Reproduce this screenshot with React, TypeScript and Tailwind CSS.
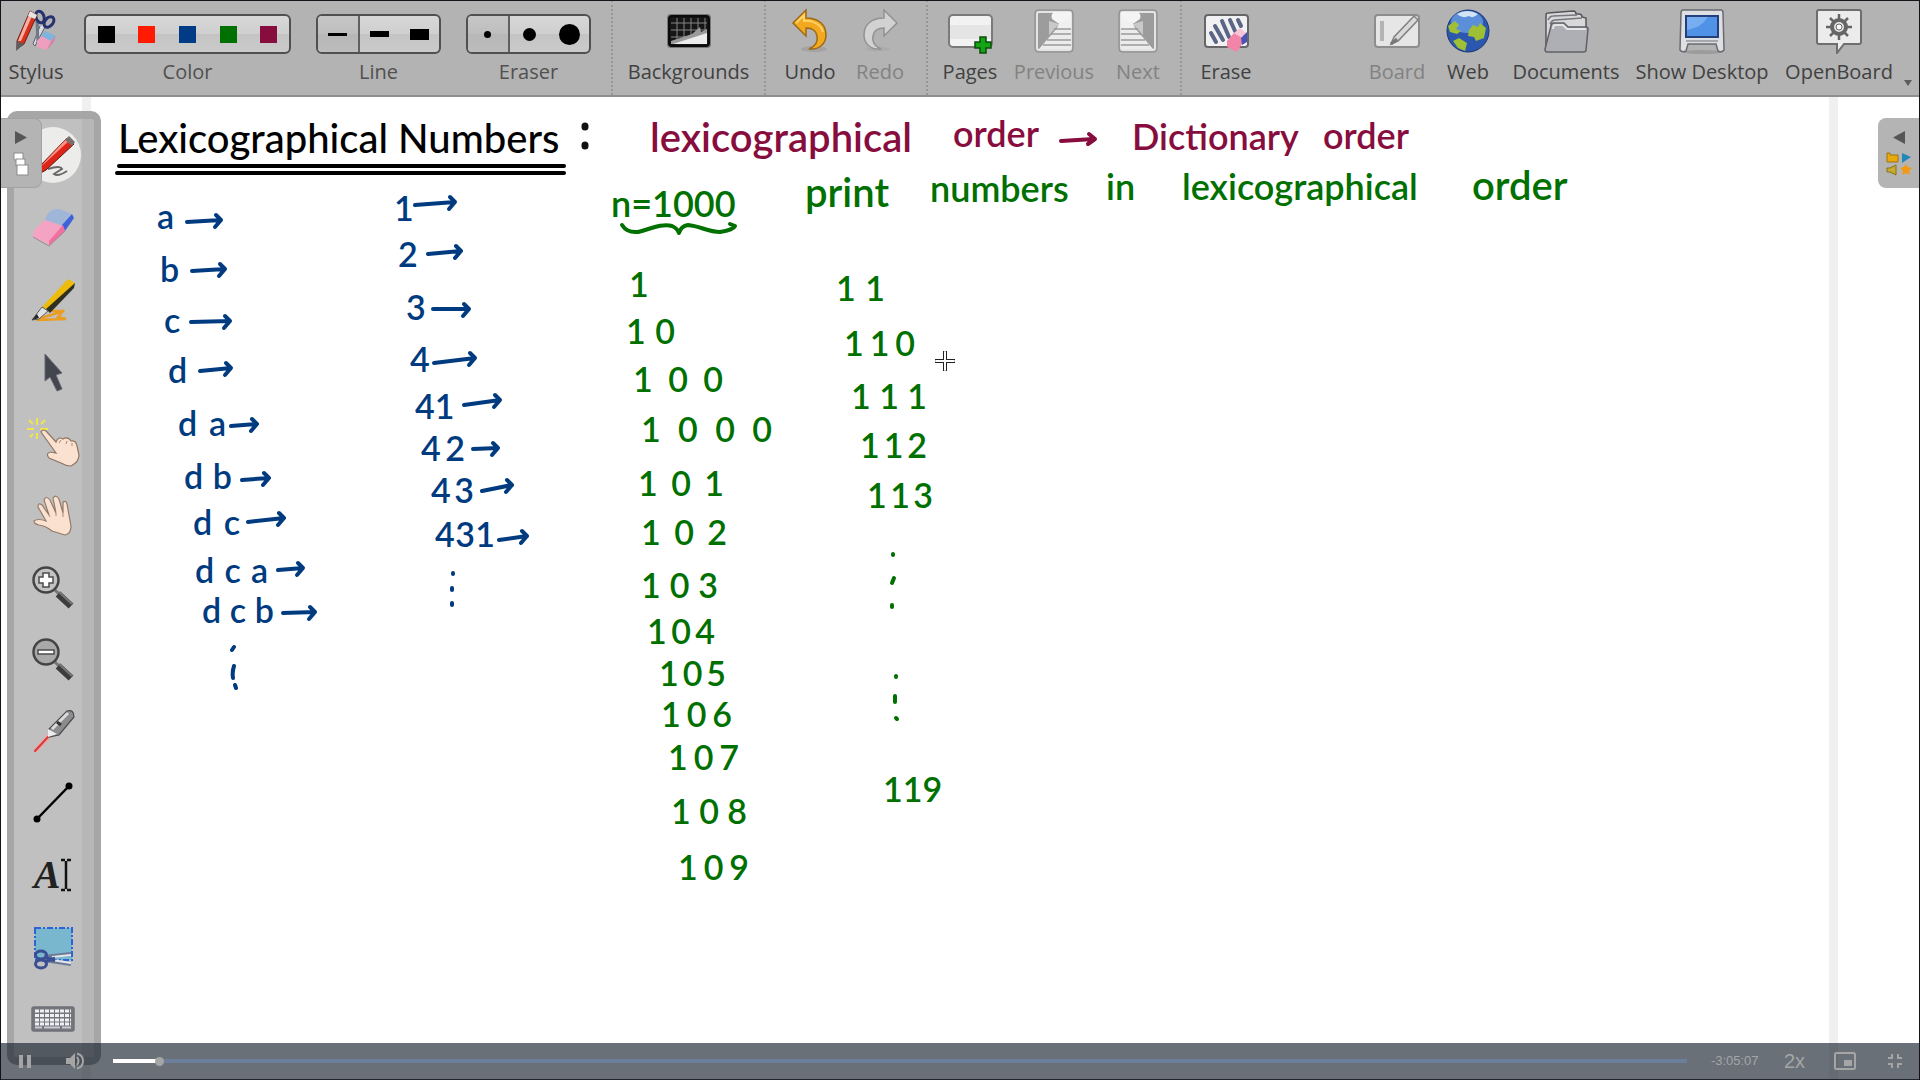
import React from "react";

const label = "font-['Open_Sans','Noto_Sans',sans-serif] text-[20px] leading-7 whitespace-nowrap";

/* ---------- Toolbar icons ---------- */

function Icon({ children, className }: { children: React.ReactNode; className?: string }) {
  return (
    <svg viewBox="0 0 46 46" className={className ?? "h-[46px] w-[46px]"} aria-hidden="true">
      {children}
    </svg>
  );
}

const StylusIcon = () => (
  <Icon>
    <path d="M27 18 L20 36 L22 38 L33 17" fill="#d8dce3" stroke="#59606e" strokeWidth="1" />
    <path d="M24 12 L25 35" stroke="#6f7784" strokeWidth="3" />
    <ellipse cx="27" cy="9" rx="4" ry="6" fill="none" stroke="#26336f" strokeWidth="3" transform="rotate(-20 27 9)" />
    <ellipse cx="36" cy="14" rx="4" ry="6" fill="none" stroke="#26336f" strokeWidth="3" transform="rotate(40 36 14)" />
    <path d="M24 33 L30 26 L39 30 L34 42 L24 39 Z" fill="#ee9fc0" />
    <path d="M28 28 L32 23 L43 28 L38 33 Z" fill="#7fb2dc" />
    <path d="M38 33 L43 28 L41 34 L34 42 Z" fill="#d983a8" />
    <path d="M17 3 L24 7 L11 36 L4 41 L4 33 Z" fill="#d9301c" stroke="#6d2016" strokeWidth="1" />
    <path d="M17 4 L20 6 L8 33 L5 33 Z" fill="#f5b0a4" />
    <path d="M4 33 L11 36 L3 43 Z" fill="#5d5d5d" />
    <path d="M15 8 L22 11 L24 7 L17 3 Z" fill="#e5e5e5" />
  </Icon>
);

const BackgroundsIcon = () => (
  <Icon>
    <rect x="1" y="6" width="44" height="34" rx="4" fill="#777" />
    <rect x="3" y="8" width="40" height="30" rx="3" fill="#161616" stroke="#0b0b0b" strokeWidth="2" />
    <path d="M5 15 H41 M5 22 H41 M5 29 H41 M11 10 V36 M18 10 V36 M25 10 V36 M32 10 V36 M39 10 V36" stroke="#858585" strokeWidth="1" />
    <path d="M5 33 L26 26 L34 19 L35 24 L41 21 V36 H5 Z" fill="#9a9a9a" />
    <path d="M7 36 L41 25 V36 Z" fill="#ececec" />
  </Icon>
);

const arrowPath = "M6 15 L19 2 V10 C32 10 39 17 39 27 C39 36 32 42 22 41 C29 38 31 33 30 28 C29 22 25 20 19 20 V28 Z";
const UndoIcon = () => (
  <Icon>
    <ellipse cx="27" cy="41" rx="13" ry="3" fill="#a3a3a3" />
    <path d={arrowPath} fill="#f2a91f" stroke="#9c6a17" strokeWidth="1.5" />
    <path d="M9 15 L17 7 V13 C27 12 34 17 36 24" fill="none" stroke="#ffd36b" strokeWidth="2" />
  </Icon>
);
const RedoIcon = () => (
  <Icon>
    <g transform="translate(46 0) scale(-1 1)">
      <ellipse cx="25" cy="41" rx="12" ry="2" fill="#aaa" />
      <path d={arrowPath} fill="#d2d2d2" stroke="#929292" strokeWidth="1.5" />
    </g>
  </Icon>
);
const PagesIcon = () => (
  <Icon>
    <rect x="2" y="7" width="43" height="32" rx="4" fill="#f2f2f2" stroke="#7a7a7a" strokeWidth="2" />
    <path d="M3 24 H44" stroke="#e5e5e5" strokeWidth="14" />
    <path d="M33 29 H39 V34 H44 V40 H39 V45 H33 V40 H28 V34 H33 Z" fill="#14a514" stroke="#0c4d0c" strokeWidth="1.5" />
  </Icon>
);
const PageArt = () => (
  <>
    <rect x="4" y="2" width="38" height="42" rx="3" fill="#a9a9a9" stroke="#8b8b8b" strokeWidth="1" />
    <rect x="6" y="4" width="34" height="38" rx="2" fill="#9c9c9c" stroke="#e4e4e4" strokeWidth="2" />
    <path d="M28 18 L40 18 V41 H8 Z" fill="#ececec" />
    <path d="M21 6 Q19 11 24 13 Q29 18 37 13 L40 10 V4 H23 Z" fill="#f4f4f4" />
    <path d="M28 15 L40 10 V20 H26 Z" fill="#f0f0f0" />
    <path d="M18 13 L28 16 L18 27 Z" fill="#c9c9c9" />
    <path d="M23 21 H40 M20 26 H40 M16 32 H40 M12 37 H40" stroke="#9a9a9a" strokeWidth="1.5" />
  </>
);
const PreviousIcon = () => (
  <Icon>
    <PageArt />
  </Icon>
);
const NextIcon = () => (
  <Icon>
    <g transform="translate(46 0) scale(-1 1)">
      <PageArt />
    </g>
  </Icon>
);
const EraseIcon = () => (
  <Icon>
    <rect x="2" y="7" width="43" height="32" rx="3" fill="#f1f1f4" stroke="#666" strokeWidth="2" />
    <path d="M8 25 L13 34 M12 18 L20 32 M19 13 L26 29 M27 12 L32 23 M35 12 L38 18" fill="none" stroke="#5b6585" strokeWidth="4" strokeLinecap="round" />
    <path d="M24 33 L31 25 L42 31 L34 44 L24 39 Z" fill="#f284a8" />
    <path d="M31 25 L37 20 L44 26 L41 31 Z" fill="#f8c3d6" />
    <path d="M38 30 L44 24 V34 L39 37 Z" fill="#4a53b8" />
  </Icon>
);
const BoardIcon = () => (
  <Icon>
    <rect x="1" y="7" width="44" height="32" rx="3" fill="#e6e6e6" stroke="#8d8d8d" strokeWidth="2" />
    <rect x="6" y="13" width="4" height="20" fill="#b4b4b4" />
    <path d="M17 36 L20 29 L40 8 L44 12 L24 33 Z" fill="#d9d9d9" stroke="#808080" strokeWidth="1.5" />
    <path d="M17 36 L23 31" stroke="#777" strokeWidth="3" />
  </Icon>
);
const WebIcon = () => (
  <Icon>
    <circle cx="23" cy="23" r="21" fill="#2b57ae" stroke="#1b3675" strokeWidth="1" />
    <ellipse cx="22" cy="14" rx="16" ry="11" fill="#5c8fda" />
    <path d="M12 6 Q22 0 33 6 Q28 11 24 8 Q17 11 12 6 Z" fill="#d4e4f7" />
    <path d="M3 18 L10 13 L14 17 L11 21 L16 23 L12 26 L5 24 Z M24 22 L28 17 L33 19 L35 15 L41 20 L39 30 L31 33 L29 29 L23 28 Z M8 33 L14 30 L22 35 L20 43 L13 40 Z" fill="#9fbf35" />
  </Icon>
);
const DocumentsIcon = () => (
  <Icon>
    <path d="M3 40 V7 Q3 5 5 5 L30 3 Q33 3 33 6 L36 6 Q39 6 39 9 L43 10 V40 Z" fill="#d8d8da" stroke="#55565a" strokeWidth="1.5" />
    <path d="M5 12 Q7 8 10 8 L34 7 M7 16 Q9 12 12 12 L39 10" fill="none" stroke="#77787c" strokeWidth="1.5" />
    <path d="M8 18 Q8 15 11 15 H21 L25 19 H43 Q45 19 45 21 L43 42 Q43 44 40 44 H4 Q2 44 2 41 Z" fill="#aeafb4" stroke="#606165" strokeWidth="1.5" />
    <path d="M10 21 Q10 17 13 17 H20 L24 21 H43" fill="none" stroke="#e5e5e8" strokeWidth="2" />
  </Icon>
);
const DesktopIcon = () => (
  <Icon>
    <ellipse cx="24" cy="44" rx="20" ry="2" fill="#9c9c9c" />
    <path d="M4 2 H42 Q44 2 44 5 L45 42 Q43 45 39 43 L37 36 H9 L7 43 Q3 45 1 42 L2 5 Q2 2 4 2 Z" fill="#dedfe2" stroke="#6a6b70" strokeWidth="1.5" />
    <rect x="6" y="7" width="34" height="23" fill="#24407b" />
    <rect x="8" y="9" width="30" height="19" fill="#4f92e6" />
    <path d="M8 22 Q22 20 29 9 H8 Z" fill="#76aef1" />
    <path d="M7 33 H39" stroke="#93949a" strokeWidth="1.5" />
  </Icon>
);
const OpenBoardIcon = () => (
  <Icon>
    <path d="M3 2 H43 Q45 2 45 4 V34 Q45 36 43 36 H28 L21 45 V36 H3 Q1 36 1 34 V4 Q1 2 3 2 Z" fill="#ececec" stroke="#6e6e6e" strokeWidth="2" />
    <path d="M23 6 V32 M10 19 H36 M14 10 L32 28 M32 10 L14 28" stroke="#666" strokeWidth="2.5" />
    <circle cx="23" cy="19" r="7" fill="#e8e8e8" stroke="#666" strokeWidth="4" />
    <circle cx="23" cy="19" r="3" fill="#fff" stroke="#666" strokeWidth="1" />
  </Icon>
);

/* ---------- Palette icons ---------- */

const Pen = () => (
  <svg viewBox="0 0 58 58" className="h-[58px] w-[58px]" aria-hidden="true">
    <circle cx="29" cy="29" r="28" fill="#ececea" />
    <path d="M24 43 Q36 39 38 43 Q33 46 30 48 Q34 51 43 45" fill="none" stroke="#686868" strokeWidth="2" />
    <path d="M43 12 L50 18 L22 44 L15 48 L16 40 Z" fill="#dc2418" stroke="#5d1b16" strokeWidth="1" />
    <path d="M43 12 L46 14 L20 38 L17 40 Z" fill="#ff8e80" />
    <path d="M41 14 L45 10 L51 16 L48 20 Z" fill="#77706c" />
  </svg>
);
const Eraser = () => (
  <Icon>
    <path d="M4 26 L17 14 L33 22 L19 40 L3 33 Z" fill="#f4a3c3" />
    <path d="M15 16 Q18 4 29 5 L42 10 L33 22 Z" fill="#a0b6d8" />
    <path d="M32 21 L42 10 L44 14 L35 27 Z" fill="#3f62d8" />
    <path d="M33 21 L35 27 L19 42 L19 37 Z" fill="#f0709f" />
    <path d="M3 33 L19 42 L35 27" fill="none" stroke="#a58690" strokeWidth="1" />
  </Icon>
);
const Marker = () => (
  <Icon>
    <path d="M8 43 Q24 38 34 35 L22 35 M34 34 L28 41 L36 43 L6 44" fill="none" stroke="#e99d22" strokeWidth="2.5" />
    <path d="M38 3 L45 7 L20 35 L12 31 Z" fill="#edbb0a" />
    <path d="M45 7 L44 12 L20 37 L16 33 Z" fill="#30301f" />
    <path d="M12 31 L18 35 L9 43 L2 44 Z" fill="#dfe1e4" stroke="#5b5b5b" strokeWidth="1" />
    <path d="M2 44 L7 38 L9 42 Z" fill="#222" />
  </Icon>
);
const Pointer = () => (
  <Icon>
    <path d="M15 6 V33 L20 29 L27 43 L32 41 L26 27 L32 25 Z" fill="#43454f" stroke="#666975" strokeWidth="1" />
  </Icon>
);
const Finger = () => (
  <svg viewBox="0 0 54 54" className="h-[54px] w-[54px]" aria-hidden="true">
    <path d="M11 2 V9 M11 17 V23 M1 13 H8 M14 13 H22 M3 4 L7 8 M19 4 L15 8 M4 21 L7 18" stroke="#eee64a" strokeWidth="2" />
    <path d="M15 16 Q17 12 21 16 L30 26 Q32 20 37 23 Q42 20 45 25 Q50 24 51 30 L53 39 Q53 46 45 50 Q40 50 35 47 L23 42 Q19 37 25 36 L30 37 Z" fill="#fbe1cf" stroke="#8e7564" strokeWidth="1.2" />
    <path d="M33 27 L35 24 M40 28 L41 25 M46 30 V27" stroke="#a98b78" strokeWidth="1" />
  </svg>
);
const Hand = () => (
  <Icon>
    <path d="M4 29 Q8 26 16 29 L8 15 Q8 10 12 13 L19 23 L14 8 Q16 3 20 8 L26 21 L23 6 Q26 2 29 7 L33 21 L33 10 Q36 8 37 12 L41 34 Q41 42 35 43 L22 39 Q16 34 9 33 Q4 32 4 29 Z" fill="#fbe1cf" stroke="#947b69" strokeWidth="1.2" />
    <path d="M19 23 L20 25 M26 21 V24 M33 21 V25" stroke="#a98b78" strokeWidth="1" />
  </Icon>
);
const Zoom = ({ plus }: { plus?: boolean }) => (
  <Icon>
    <path d="M25 26 L30 31" stroke="#777" strokeWidth="3" />
    <path d="M28 30 L41 42" stroke="#3c3c3c" strokeWidth="7" />
    <path d="M29 28 L42 40" stroke="#777" strokeWidth="2" />
    <circle cx="16" cy="16" r="12.5" fill={plus ? "#c3c3c5" : "#a9a9a9"} stroke="#444" strokeWidth="2.5" />
    <path
      d={plus ? "M13 9 H19 V13 H23 V19 H19 V23 H13 V19 H9 V13 H13 Z" : "M8 14 H24 V18 H8 Z"}
      fill="#fff"
      stroke="#4c4c4c"
      strokeWidth="1.5"
    />
  </Icon>
);
const Laser = () => (
  <Icon>
    <path d="M6 42 L18 29" stroke="#e9aaa7" strokeWidth="5" strokeLinecap="round" />
    <path d="M5 43 L18 29" stroke="#d73a3a" strokeWidth="2" strokeLinecap="round" />
    <path d="M37 3 Q44 1 44 9 L29 27 L19 29 L19 21 Z" fill="#8c8c8e" stroke="#4b4b4c" strokeWidth="1.2" />
    <path d="M38 5 L22 21" stroke="#dcdcde" strokeWidth="3" />
    <path d="M27 14 L31 17" stroke="#333" strokeWidth="3" />
    <path d="M18 21 L27 26 L18 29 Z" fill="#ececec" />
  </Icon>
);
const LineTool = () => (
  <Icon>
    <path d="M7 39 L39 6" stroke="#000" strokeWidth="2.5" />
    <circle cx="7" cy="39" r="3.5" />
    <circle cx="39" cy="6" r="3.5" />
  </Icon>
);
const TextTool = () => (
  <span className="flex items-center">
    <span className="font-['Liberation_Serif',serif] text-[40px] font-bold italic leading-10 text-[#222]">A</span>
    <svg viewBox="0 0 12 34" className="h-[34px] w-3" aria-hidden="true">
      <path d="M1 2 H5 M7 2 H11 M6 3 V31 M1 32 H5 M7 32 H11" stroke="#111" strokeWidth="2.5" />
    </svg>
  </span>
);
const Capture = () => (
  <Icon>
    <rect x="5" y="4" width="37" height="32" fill="#79b7cf" stroke="#2c64d8" strokeWidth="2" strokeDasharray="6 2 2 2" />
    <path d="M14 33 L41 30 M14 36 L41 40" stroke="#6d7a94" strokeWidth="4" />
    <path d="M22 33 L41 31 M22 36 L41 39" stroke="#e4e8ef" strokeWidth="2" />
    <ellipse cx="11" cy="31" rx="5.5" ry="4" fill="none" stroke="#3a4f93" strokeWidth="3" />
    <ellipse cx="11" cy="40" rx="5.5" ry="4" fill="none" stroke="#3a4f93" strokeWidth="3" />
    <path d="M15 33 L25 37 M15 38 L25 34" stroke="#3a4f93" strokeWidth="3" />
  </Icon>
);
const Keyboard = () => (
  <Icon>
    <rect x="2" y="11" width="42" height="24" rx="2" fill="#74767c" stroke="#6f7178" strokeWidth="1.5" />
    <path d="M5 15 H41 M5 19.5 H41 M5 24 H41 M5 28 H41" stroke="#eef0f5" strokeWidth="3" strokeDasharray="4 1" />
    <path d="M5 31.5 H12 M14 31.5 H30 M32 31.5 H41" stroke="#c9cbd2" strokeWidth="2" />
  </Icon>
);

const tools: { name: string; icon: React.ReactNode }[] = [
  { name: "Pen", icon: <Pen /> },
  { name: "Eraser", icon: <Eraser /> },
  { name: "Highlighter", icon: <Marker /> },
  { name: "Select", icon: <Pointer /> },
  { name: "Interact", icon: <Finger /> },
  { name: "Scroll page", icon: <Hand /> },
  { name: "Zoom in", icon: <Zoom plus /> },
  { name: "Zoom out", icon: <Zoom /> },
  { name: "Laser pointer", icon: <Laser /> },
  { name: "Draw line", icon: <LineTool /> },
  { name: "Write text", icon: <TextTool /> },
  { name: "Capture", icon: <Capture /> },
  { name: "Virtual keyboard", icon: <Keyboard /> },
];

/* ---------- Toolbar pieces ---------- */

function ToolButton({ text, width, disabled, children }: { text: string; width: string; disabled?: boolean; children: React.ReactNode }) {
  return (
    <button disabled={disabled} className={`flex shrink-0 flex-col items-center pt-2 ${width}`}>
      {children}
      <span className={`${label} mt-1 ${disabled ? "text-[#828282]" : "text-[#414141]"}`}>{text}</span>
    </button>
  );
}

function Group({ text, width, children }: { text: string; width: string; children: React.ReactNode }) {
  return (
    <div role="group" aria-label={text} className={`flex shrink-0 flex-col items-center pt-3.5 ${width}`}>
      <div className="flex h-10 w-full items-stretch overflow-hidden rounded-md border-2 border-[#505050] bg-[linear-gradient(#d8d8d8,#cfcfcf_50%,#c4c4c4_50%,#cacaca)]">
        {children}
      </div>
      <span className={`${label} mt-1 text-[#505050]`}>{text}</span>
    </div>
  );
}

const Separator = () => <div className="w-0 shrink-0 border-l-2 border-dotted border-[#979797]" />;

const swatches = [
  { name: "Black", cls: "bg-black" },
  { name: "Red", cls: "bg-[#ff1a00]" },
  { name: "Blue", cls: "bg-[#003b86]" },
  { name: "Green", cls: "bg-[#007000]" },
  { name: "Maroon", cls: "bg-[#870d3e]" },
];
const lines = [
  { name: "Thin line", cls: "h-[3px]" },
  { name: "Medium line", cls: "h-[6px]" },
  { name: "Thick line", cls: "h-[11px]" },
];
const erasers = [
  { name: "Small eraser", cls: "size-[7px]" },
  { name: "Medium eraser", cls: "size-[13px]" },
  { name: "Large eraser", cls: "size-[21px]" },
];
const segment = "flex flex-1 items-center justify-center";
const picked = "border-r-2 border-[#606060] bg-[linear-gradient(#c6c6c6,#bebebe_50%,#b7b7b7_50%,#bcbcbc)]";

/* ---------- Board content ---------- */

const TOP = 97;

type Note = { x: number; w: number; y: number; t: string; c: string };
const blue = "text-[#003b80]";
const green = "text-[#007000]";
const maroon = "text-[#870d3e]";

// x and w give the span that the characters are spread over, y the middle of the row
const notes: Note[] = [
  { x: 157, w: 20, y: 216, t: "a", c: blue },
  { x: 160, w: 20, y: 269, t: "b", c: blue },
  { x: 164, w: 18, y: 320, t: "c", c: blue },
  { x: 168, w: 20, y: 370, t: "d", c: blue },
  { x: 178, w: 48, y: 423, t: "da", c: blue },
  { x: 184, w: 48, y: 476, t: "db", c: blue },
  { x: 193, w: 47, y: 522, t: "dc", c: blue },
  { x: 195, w: 73, y: 570, t: "dca", c: blue },
  { x: 202, w: 72, y: 610, t: "dcb", c: blue },
  { x: 394, w: 18, y: 208, t: "1", c: blue },
  { x: 398, w: 20, y: 254, t: "2", c: blue },
  { x: 406, w: 18, y: 307, t: "3", c: blue },
  { x: 410, w: 18, y: 359, t: "4", c: blue },
  { x: 415, w: 39, y: 406, t: "41", c: blue },
  { x: 421, w: 44, y: 448, t: "42", c: blue },
  { x: 431, w: 43, y: 490, t: "43", c: blue },
  { x: 435, w: 60, y: 534, t: "431", c: blue },
  { x: 629, w: 18, y: 284, t: "1", c: green },
  { x: 626, w: 49, y: 331, t: "10", c: green },
  { x: 633, w: 90, y: 379, t: "100", c: green },
  { x: 641, w: 131, y: 429, t: "1000", c: green },
  { x: 638, w: 86, y: 483, t: "101", c: green },
  { x: 641, w: 86, y: 532, t: "102", c: green },
  { x: 641, w: 77, y: 585, t: "103", c: green },
  { x: 647, w: 68, y: 631, t: "104", c: green },
  { x: 659, w: 67, y: 673, t: "105", c: green },
  { x: 661, w: 71, y: 714, t: "106", c: green },
  { x: 668, w: 71, y: 757, t: "107", c: green },
  { x: 671, w: 76, y: 811, t: "108", c: green },
  { x: 678, w: 71, y: 867, t: "109", c: green },
  { x: 836, w: 49, y: 288, t: "11", c: green },
  { x: 844, w: 71, y: 343, t: "110", c: green },
  { x: 851, w: 76, y: 396, t: "111", c: green },
  { x: 860, w: 67, y: 445, t: "112", c: green },
  { x: 867, w: 66, y: 495, t: "113", c: green },
  { x: 883, w: 58, y: 789, t: "119", c: green },
];

const medium = "text-[36px]";
const large = "text-[40px]";

type Phrase = { x: number; y: number; t: string; c: string; s: string };
// y is the middle of the line box
const phrases: Phrase[] = [
  { x: 650, y: 137, t: "lexicographical", c: maroon, s: large },
  { x: 953, y: 133, t: "order", c: maroon, s: medium },
  { x: 1132, y: 136, t: "Dictionary", c: maroon, s: medium },
  { x: 1323, y: 135, t: "order", c: maroon, s: medium },
  { x: 611, y: 203, t: "n=1000", c: green, s: medium },
  { x: 805, y: 192, t: "print", c: green, s: large },
  { x: 930, y: 188, t: "numbers", c: green, s: medium },
  { x: 1106, y: 186, t: "in", c: green, s: medium },
  { x: 1182, y: 186, t: "lexicographical", c: green, s: medium },
  { x: 1472, y: 185, t: "order", c: green, s: large },
];

// start x, start y, tip x, tip y
const blueArrows = [
  [187, 222, 221, 220], [192, 271, 225, 269], [191, 322, 230, 321], [200, 371, 231, 368],
  [231, 426, 257, 424], [242, 480, 269, 478], [248, 522, 284, 518], [278, 570, 303, 568],
  [283, 613, 315, 612], [415, 205, 455, 202], [428, 254, 461, 251], [433, 309, 469, 309],
  [434, 363, 475, 358], [464, 405, 500, 400], [473, 449, 498, 448], [482, 491, 512, 485],
  [499, 540, 527, 536],
];
const arrowD = ([a, b, c, d]: number[]) =>
  `M${a} ${b} L${c} ${d} M${c - 5} ${d - 5} L${c} ${d} L${c - 6} ${d + 7}`;

function Board() {
  return (
    <section aria-label="Page" className="absolute inset-0 overflow-hidden bg-white">
      <div className="absolute inset-y-0 left-[82px] w-[9px] bg-[#f0f0f0]" />
      <div className="absolute inset-y-0 right-[82px] w-[9px] bg-[#f0f0f0]" />
      <h1
        className="absolute left-[118px] whitespace-nowrap font-['Comic_Sans_MS','Lato',sans-serif] text-[40px] font-medium leading-[48px] text-black"
        style={{ top: 138 - TOP - 24 }}
      >
        Lexicographical Numbers
      </h1>
      {phrases.map((p, i) => (
        <p
          key={i}
          className={`absolute whitespace-nowrap font-['Lato',sans-serif] leading-10 font-semibold ${p.s} ${p.c}`}
          style={{ left: p.x, top: p.y - TOP - 20 }}
        >
          {p.t}
        </p>
      ))}
      {notes.map((n, i) => (
        <p
          key={i}
          className={`absolute flex justify-between font-['Lato',sans-serif] text-[34px] leading-8 font-semibold ${n.c}`}
          style={{ left: n.x, top: n.y - TOP - 16, width: n.w }}
        >
          {n.t.split("").map((ch, k) => (
            <span key={k}>{ch}</span>
          ))}
        </p>
      ))}
      <svg
        viewBox="0 97 1600 900"
        className="absolute left-0 top-0 h-[900px] w-[1600px]"
        fill="none"
        strokeWidth="4"
        strokeLinecap="round"
        strokeLinejoin="round"
        aria-hidden="true"
      >
        <path d="M119 166 H564 M117 173 H564" stroke="#000" />
        <path d="M585 126 V127 M585 145 V146" stroke="#111" strokeWidth="7" />
        <g stroke="#003b80">
          {blueArrows.map((a, i) => (
            <path key={i} d={arrowD(a)} />
          ))}
          <path d="M234 647 L232 650 M234 666 Q232 672 233 678 M235 685 L236 688 M453 573 V574 M452 588 V590 M452 603 V605" />
        </g>
        <path d="M1061 141 L1094 139 M1089 134 L1095 139 L1088 144" stroke="#870d3e" />
        <g stroke="#007000">
          <path d="M622 225 Q627 233 638 232 C650 229 662 223 672 226 Q677 228 679 233 Q681 226 688 225 C700 226 708 232 720 232 Q733 230 735 226 L730 224" />
          <path d="M893 554 V555 M894 578 L892 583 M892 605 V607 M896 676 V677 M895 696 V702 M896 718 L897 719" />
        </g>
        <path d="M945 353 V369 M937 361 H953" stroke="#222" strokeWidth="4" strokeLinecap="square" />
        <path d="M945 352 V370 M936 361 H954" stroke="#fff" strokeWidth="2" />
      </svg>
    </section>
  );
}

export default function App() {
  return (
    <div className="relative flex min-h-screen flex-col bg-white">
      <header className="flex h-[97px] shrink-0 items-stretch border-b-2 border-[#8f8f8f] bg-[#b3b3b3]">
        <ToolButton text="Stylus" width="w-[72px]"><StylusIcon /></ToolButton>
        <div className="ml-3 flex gap-[25px]">
          <Group text="Color" width="w-[207px]">
            {swatches.map((s) => (
              <button key={s.name} aria-label={s.name} className={segment}>
                <span className={`size-[17px] ${s.cls}`} />
              </button>
            ))}
          </Group>
          <Group text="Line" width="w-[125px]">
            {lines.map((s, i) => (
              <button key={s.name} aria-label={s.name} className={`${segment} ${i === 0 ? picked : ""}`}>
                <span className={`w-[19px] bg-black ${s.cls}`} />
              </button>
            ))}
          </Group>
          <Group text="Eraser" width="w-[125px]">
            {erasers.map((s, i) => (
              <button key={s.name} aria-label={s.name} className={`${segment} ${i === 0 ? picked : ""}`}>
                <span className={`rounded-full bg-black ${s.cls}`} />
              </button>
            ))}
          </Group>
        </div>
        <div className="ml-5 flex">
          <Separator />
          <ToolButton text="Backgrounds" width="w-[151px]"><BackgroundsIcon /></ToolButton>
          <Separator />
          <div className="flex px-2.5">
            <ToolButton text="Undo" width="w-[68px]"><UndoIcon /></ToolButton>
            <ToolButton text="Redo" width="w-[72px]" disabled><RedoIcon /></ToolButton>
          </div>
          <Separator />
          <ToolButton text="Pages" width="w-[84px]"><PagesIcon /></ToolButton>
          <ToolButton text="Previous" width="w-[84px]" disabled><PreviousIcon /></ToolButton>
          <ToolButton text="Next" width="w-[84px]" disabled><NextIcon /></ToolButton>
          <Separator />
          <ToolButton text="Erase" width="w-[88px]"><EraseIcon /></ToolButton>
        </div>
        <div className="ml-auto flex pr-1.5">
          <ToolButton text="Board" width="w-[70px]" disabled><BoardIcon /></ToolButton>
          <ToolButton text="Web" width="w-[72px]"><WebIcon /></ToolButton>
          <ToolButton text="Documents" width="w-[124px]"><DocumentsIcon /></ToolButton>
          <ToolButton text="Show Desktop" width="w-[148px]"><DesktopIcon /></ToolButton>
          <ToolButton text="OpenBoard" width="w-[126px]"><OpenBoardIcon /></ToolButton>
          <button aria-label="More" className="flex items-end pb-2">
            <svg viewBox="0 0 12 8" className="h-2 w-3" aria-hidden="true"><path d="M2 1 H10 L6 7 Z" fill="#5c5c5c" /></svg>
          </button>
        </div>
      </header>

      <main className="relative flex flex-1 items-start">
        <Board />
        <nav
          aria-label="Drawing tools"
          className="relative ml-[7px] mt-3.5 w-[94px] rounded-[10px] border-x-[7px] border-y-[8px] border-[#a6a6a6] bg-[linear-gradient(to_right,#c0c0c0_68px,#b7b7b7_68px)] pb-0.5"
        >
          {tools.map((t) => (
            <button key={t.name} aria-label={t.name} className="flex h-[72px] w-[78px] items-center justify-center">
              {t.icon}
            </button>
          ))}
        </nav>
        <button
          aria-label="Show pages"
          className="absolute left-0 top-[21px] flex h-[70px] w-[42px] flex-col items-center justify-center gap-2 rounded-r-lg border border-l-0 border-[#a2a2a2] bg-[#b4b4b4]"
        >
          <svg viewBox="0 0 12 13" className="h-[13px] w-3" aria-hidden="true"><path d="M0 0 L12 6.5 L0 13 Z" fill="#565656" /></svg>
          <svg viewBox="0 0 16 24" className="h-6 w-4" aria-hidden="true">
            <rect x="1" y="1" width="9" height="7" fill="#fff" stroke="#8b8b8b" />
            <rect x="3" y="7" width="9" height="7" fill="#fff" stroke="#8b8b8b" />
            <rect x="4" y="13" width="11" height="10" fill="#fff" stroke="#8b8b8b" />
          </svg>
        </button>
        <button
          aria-label="Show library"
          className="absolute right-0 top-[21px] flex h-[70px] w-[42px] flex-col items-center justify-center gap-2 rounded-l-lg bg-[#b4b4b4]"
        >
          <svg viewBox="0 0 12 13" className="h-[13px] w-3" aria-hidden="true"><path d="M12 0 L0 6.5 L12 13 Z" fill="#565656" /></svg>
          <svg viewBox="0 0 26 24" className="h-6 w-[26px]" aria-hidden="true">
            <path d="M1 1 H4 V3 H12 V10 H1 Z" fill="#e8a90d" stroke="#9b7410" />
            <path d="M16 1 L25 5 L16 11 Z" fill="#2387b8" />
            <path d="M1 16 H4 L10 13 V23 L4 20 H1 Z" fill="#c9ab2d" stroke="#86711b" />
            <path d="M20 12 L22 15 L26 16 L23 19 L24 23 L20 21 L16 23 L17 19 L14 16 L18 15 Z" fill="#f29a16" />
          </svg>
        </button>
      </main>

      <footer className="absolute inset-x-0 bottom-0 flex h-[37px] items-center border-b border-[#20242c] bg-[rgba(18,28,41,0.63)] pr-[18px] font-['Liberation_Sans',sans-serif] text-[#a5a5a5]">
        <button aria-label="Pause" className="ml-[19px]">
          <svg viewBox="0 0 12 13" className="h-[13px] w-3" aria-hidden="true"><path d="M0 0 H4 V13 H0 Z M8 0 H12 V13 H8 Z" fill="#a5a5a5" /></svg>
        </button>
        <button aria-label="Mute" className="ml-[35px]">
          <svg viewBox="0 0 18 18" className="size-[18px]" aria-hidden="true">
            <path d="M0 6 H4 L9 1 V17 L4 12 H0 Z" fill="#a5a5a5" />
            <path d="M11 5 Q14 9 11 13" fill="none" stroke="#a5a5a5" strokeWidth="2" />
            <path d="M11 1.5 Q17 3 17 9 Q17 15 11 16.5" fill="none" stroke="#a5a5a5" strokeWidth="2" />
          </svg>
        </button>
        <input
          type="range"
          aria-label="Seek"
          min={0}
          max={1000}
          defaultValue={27}
          className="ml-[29px] h-1 min-w-0 flex-1 appearance-none bg-[linear-gradient(to_right,#fff_3%,#6c7e99_3%)] [&::-webkit-slider-thumb]:size-[9px] [&::-webkit-slider-thumb]:appearance-none [&::-webkit-slider-thumb]:rounded-full [&::-webkit-slider-thumb]:bg-[#a5a5a5]"
        />
        <span className="ml-6 w-12 whitespace-nowrap text-[13px]">-3:05:07</span>
        <button className="ml-[25px] text-[20px]">2x</button>
        <button aria-label="Picture in picture" className="ml-[29px]">
          <svg viewBox="0 0 22 18" className="h-[18px] w-[22px]" aria-hidden="true">
            <rect x="1" y="1" width="20" height="16" rx="1.5" fill="none" stroke="#a5a5a5" strokeWidth="2" />
            <rect x="10" y="8" width="8" height="6" fill="#a5a5a5" />
          </svg>
        </button>
        <button aria-label="Exit full screen" className="ml-8">
          <svg viewBox="0 0 14 14" className="size-3.5" aria-hidden="true">
            <path d="M0 4 H4 V0 M10 0 V4 H14 M0 10 H4 V14 M14 10 H10 V14" fill="none" stroke="#a5a5a5" strokeWidth="2" />
          </svg>
        </button>
      </footer>
      <div className="pointer-events-none absolute inset-0 border-x border-t border-[#15121a]" />
    </div>
  );
}
